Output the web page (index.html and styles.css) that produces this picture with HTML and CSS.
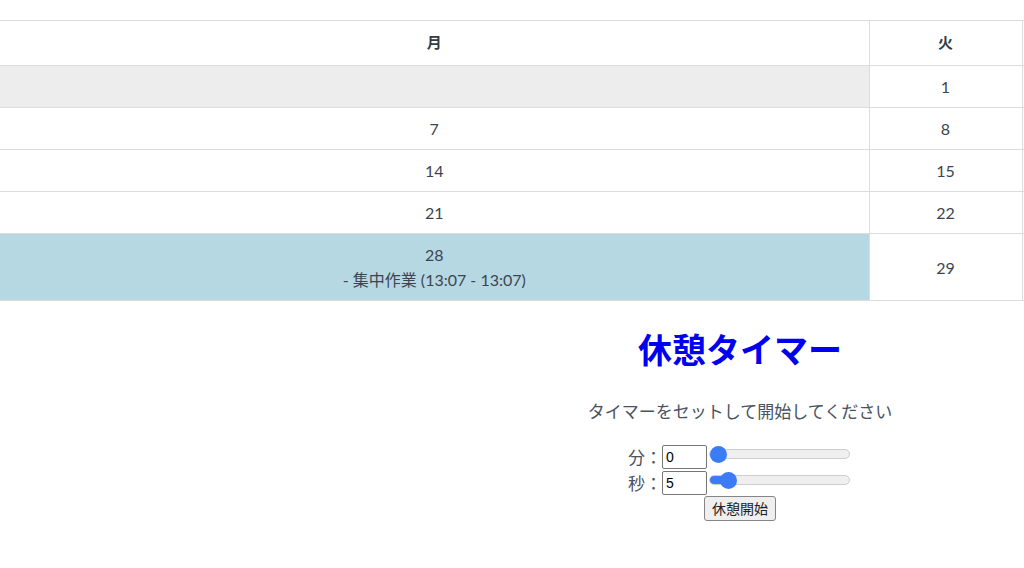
FILE: index.html
```html
<!DOCTYPE html>
<html lang="ja">
<head>
    <meta charset="UTF-8">
    <meta name="viewport" content="width=device-width, initial-scale=1.0">
    <title>カレンダーと休憩タイマー</title>
    <link rel="stylesheet" href="styles.css">
</head>
<body>
    <div class="page">
        <table class="calendar">
            <colgroup>
                <col class="col-wide">
                <col class="col-day">
                <col class="col-day">
                <col class="col-day">
                <col class="col-rest">
            </colgroup>
            <thead>
                <tr>
                    <th class="first">月</th>
                    <th>火</th>
                    <th></th>
                    <th></th>
                    <th></th>
                </tr>
            </thead>
            <tbody>
                <tr>
                    <td class="first empty"></td>
                    <td>1</td>
                    <td></td>
                    <td></td>
                    <td></td>
                </tr>
                <tr>
                    <td class="first">7</td>
                    <td>8</td>
                    <td></td>
                    <td></td>
                    <td></td>
                </tr>
                <tr>
                    <td class="first">14</td>
                    <td>15</td>
                    <td></td>
                    <td></td>
                    <td></td>
                </tr>
                <tr>
                    <td class="first">21</td>
                    <td>22</td>
                    <td></td>
                    <td></td>
                    <td></td>
                </tr>
                <tr>
                    <td class="first has-event">28<br>- 集中作業 (13:07 - 13:07)</td>
                    <td>29</td>
                    <td></td>
                    <td></td>
                    <td></td>
                </tr>
            </tbody>
        </table>

        <div class="timer">
            <h1>休憩タイマー</h1>
            <p class="lead">タイマーをセットして開始してください</p>
            <div class="controls">
                <label class="row">分：<input class="num" type="number" value="0" min="0" max="59"><input class="range" type="range" value="0" min="0" max="59" style="--fill: 0%"></label>
                <label class="row">秒：<input class="num" type="number" value="5" min="0" max="59"><input class="range" type="range" value="5" min="0" max="59" style="--fill: 8.5%"></label>
                <button class="start" onclick="startBreak()">休憩開始</button>
            </div>
        </div>
    </div>

    <script>
        // keep number box and slider in step
        document.querySelectorAll('.controls .row').forEach(row => {
            const num = row.querySelector('.num');
            const range = row.querySelector('.range');
            const paint = () => {
                range.style.setProperty('--fill', (range.value / range.max * 100) + '%');
            };
            range.addEventListener('input', () => { num.value = range.value; paint(); });
            num.addEventListener('input', () => { range.value = num.value; paint(); });
        });

        function startBreak() {
            const inputs = document.querySelectorAll('.num');
            const total = Number(inputs[0].value) * 60 + Number(inputs[1].value);
            setTimeout(() => alert('休憩終了です'), total * 1000);
        }
    </script>
</body>
</html>
```

FILE: styles.css
```css
body {
    margin: 0;
    overflow: hidden;
    background: white;
    font-family: 'Lato', 'Noto Sans CJK JP', sans-serif;
    color: #3d4451;
}
.page {
    width: 1480px;
    padding-top: 20px;
}
.calendar {
    width: 100%;
    border-collapse: collapse;
    table-layout: fixed;
    font-size: 16px;
}
.col-wide {
    width: 869px;
}
.col-day {
    width: 153px;
}
.calendar th,
.calendar td {
    border: 1px solid #dcdcdc;
    text-align: center;
    line-height: 25px;
    padding: 8px;
}
.calendar th {
    padding: 9px 8px 10px;
    font-weight: bold;
    font-size: 15px;
    color: #333b48;
}
.calendar .first {
    border-left: none;
}
.calendar .empty {
    background: #ededed;
}
.calendar .has-event {
    background: #b6d8e3;
}
.timer {
    text-align: center;
}
.timer h1 {
    margin: 28px 0 0;
    font-size: 34px;
    line-height: 42px;
    color: #0000f0;
    font-weight: bold;
}
.lead {
    margin: 29px 0 21px;
    font-size: 17px;
    line-height: 24px;
    color: #4a5260;
}
.controls {
    font-size: 17px;
    color: #4a5260;
}
.row {
    display: block;
    height: 26px;
    line-height: 25px;
}
.num {
    width: 45px;
    height: 24px;
    box-sizing: border-box;
    font-family: 'Liberation Sans', Arial, sans-serif;
    font-size: 14px;
    padding: 1px 3px;
    border: 1px solid #767676;
    border-radius: 2px;
    vertical-align: top;
    margin: 0;
}
.range {
    -webkit-appearance: none;
    appearance: none;
    width: 139px;
    height: 8px;
    margin: 4px 2px 0;
    vertical-align: top;
    border: 1px solid #cdcdcd;
    border-radius: 5px;
    background: linear-gradient(to right, #3b7cf6 var(--fill), #efefef var(--fill));
}
.range::-webkit-slider-thumb {
    -webkit-appearance: none;
    appearance: none;
    width: 17px;
    height: 17px;
    border-radius: 50%;
    background: #3b7cf6;
    border: none;
}
.start {
    font-family: 'Noto Sans CJK JP', sans-serif;
    font-size: 14px;
    line-height: 19px;
    padding: 2px 7px;
    margin-top: -1px;
    color: #222;
    background: #efefef;
    border: 1px solid #858585;
    border-radius: 3px;
}
```
